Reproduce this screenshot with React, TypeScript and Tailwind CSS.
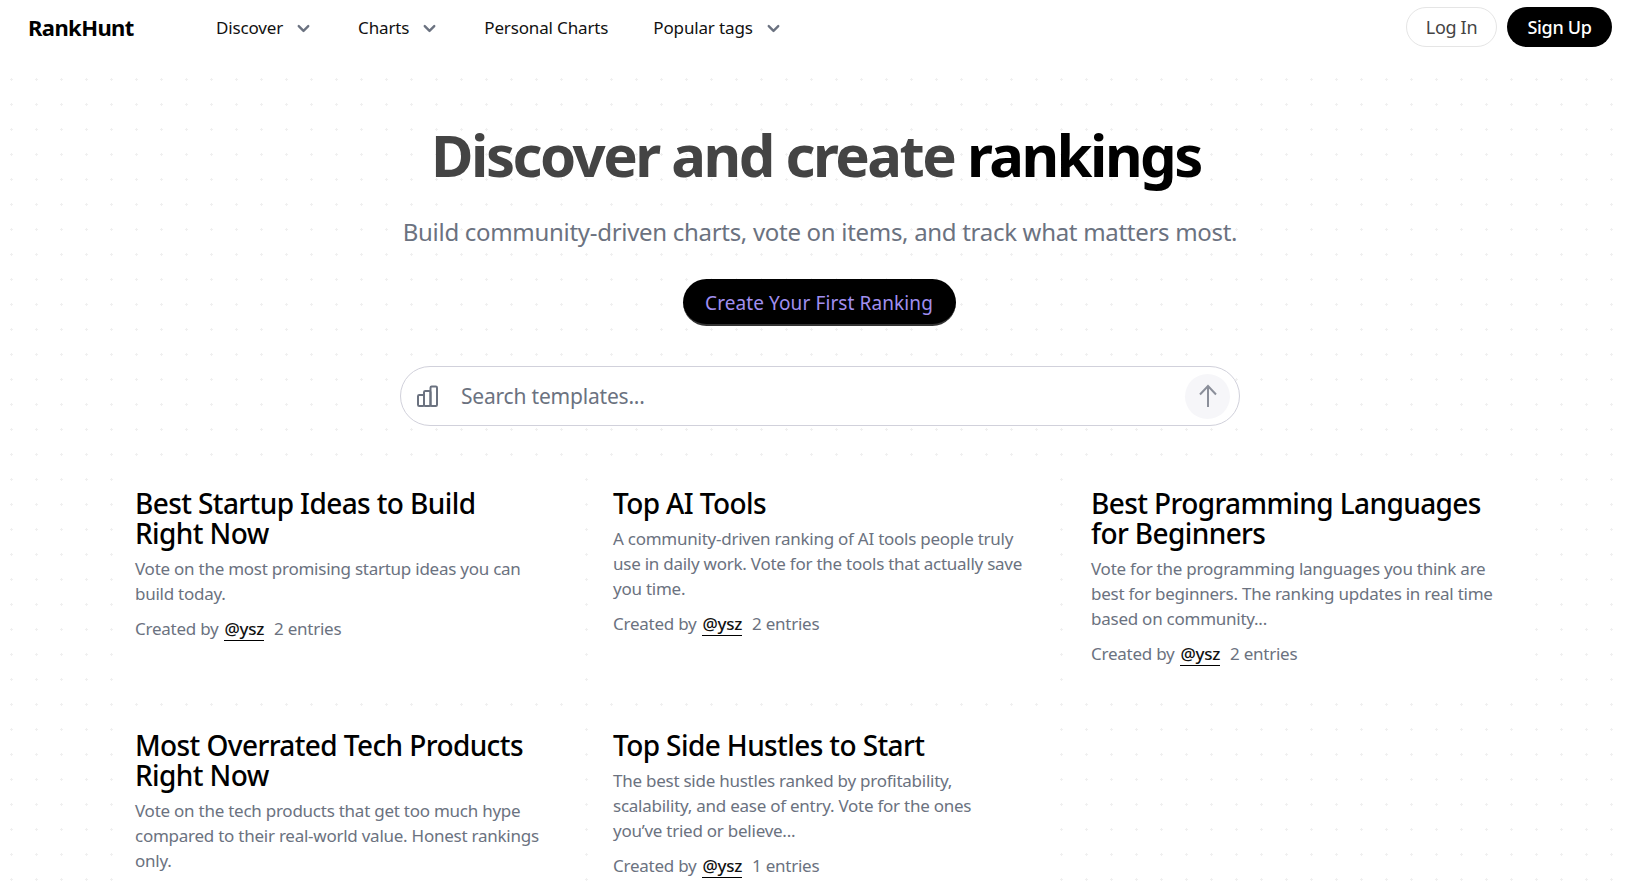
import { ChevronDown } from 'lucide-react'

type Ranking = {
  title: string
  description: string
  entries: number
}

const RANKINGS: Ranking[] = [
  {
    title: 'Best Startup Ideas to Build Right Now',
    description: 'Vote on the most promising startup ideas you can build today.',
    entries: 2,
  },
  {
    title: 'Top AI Tools',
    description:
      'A community-driven ranking of AI tools people truly use in daily work. Vote for the tools that actually save you time.',
    entries: 2,
  },
  {
    title: 'Best Programming Languages for Beginners',
    description:
      'Vote for the programming languages you think are best for beginners. The ranking updates in real time based on community...',
    entries: 2,
  },
  {
    title: 'Most Overrated Tech Products Right Now',
    description:
      'Vote on the tech products that get too much hype compared to their real-world value. Honest rankings only.',
    entries: 2,
  },
  {
    title: 'Top Side Hustles to Start',
    description:
      'The best side hustles ranked by profitability, scalability, and ease of entry. Vote for the ones you’ve tried or believe...',
    entries: 1,
  },
]

function NavItem({ label, menu = false }: { label: string; menu?: boolean }) {
  return (
    <a className="flex items-center gap-[11px] text-[17px] tracking-[-0.15px] text-[#111]">
      {label}
      {menu && <ChevronDown className="h-[19px] w-[19px] text-[#6b7280]" strokeWidth={3} />}
    </a>
  )
}

function RankingCard({ ranking }: { ranking: Ranking }) {
  return (
    <article className="bg-white pb-[24px] pl-[20px] pr-[27px] pt-[20px]">
      <h3 className="text-[28px] font-medium leading-[30px] tracking-[-0.6px] text-black">{ranking.title}</h3>
      <p className="mt-[8px] text-[17px] leading-[25px] tracking-[-0.25px] text-[#6b7280]">{ranking.description}</p>
      <div className="mt-[10px] flex items-baseline text-[17px] leading-[25px] tracking-[-0.25px] text-[#6b7280]">
        Created by
        <span className="ml-[6px] border-b border-black font-medium leading-[23px] text-[#111]">@ysz</span>
        <span className="ml-[10px]">{ranking.entries} entries</span>
      </div>
    </article>
  )
}

export default function App() {
  return (
    <div className="h-[885px] overflow-hidden bg-white bg-[radial-gradient(circle_at_11.5px_4.5px,#f0f0f0_1.2px,transparent_1.3px)] bg-[length:25px_25px] font-['Noto_Sans',sans-serif]">
      <header className="flex h-[56px] items-center bg-white pl-[28px] pr-[14px]">
        <span className="mb-[2px] w-[188px] text-[22px] font-bold tracking-[-0.6px] text-black">RankHunt</span>
        <nav className="flex items-center gap-[45px]">
          <NavItem label="Discover" menu />
          <NavItem label="Charts" menu />
          <NavItem label="Personal Charts" />
          <NavItem label="Popular tags" menu />
        </nav>
        <div className="mb-[2px] ml-auto flex items-center gap-[10px]">
          <button className="h-[40px] w-[91px] rounded-full border border-[#e5e5e5] bg-white text-[18px] tracking-[-0.3px] text-[#444]">Log In</button>
          <button className="h-[40px] w-[105px] rounded-full bg-black text-[18px] font-medium tracking-[-0.3px] text-white">Sign Up</button>
        </div>
      </header>

      <main className="flex flex-col items-center">
        <div className="flex flex-col items-center pl-[14px]">
          <h1 className="mr-[8px] mt-[59px] text-[58px] font-bold leading-[80px] tracking-[-2.5px] text-[#444]">
            Discover and create <span className="text-black">rankings</span>
          </h1>
          <p className="mt-[21px] text-[24px] leading-[32px] tracking-[-0.3px] text-[#6b7280]">
            Build community-driven charts, vote on items, and track what matters most.
          </p>
          <button className="mr-[2px] mt-[31px] h-[47px] w-[273px] rounded-full border-b-2 border-[#333] bg-black pt-[4px] text-[19px] tracking-[0.1px] text-[#a08ff0]">
            Create Your First Ranking
          </button>

          <div className="mt-[40px] flex h-[60px] w-[840px] items-center rounded-full border border-[#d1d1db] bg-white pl-[15px] pr-[9px]">
            <svg viewBox="0 0 24 24" className="h-[24px] w-[24px] text-[#6b7280]" fill="none" stroke="currentColor" strokeWidth="2">
              <rect x="2" y="11" width="6" height="11" rx="1.2" />
              <rect x="8" y="7" width="6.5" height="15" rx="1.2" />
              <rect x="14.5" y="2.5" width="6.5" height="19.5" rx="1.2" />
            </svg>
            <span className="ml-[21px] pt-[2px] text-[21px] tracking-[-0.2px] text-[#6b7280]">Search templates...</span>
            <span className="ml-auto flex h-[45px] w-[45px] items-center justify-center rounded-full bg-[#f6f6f9]">
              <svg viewBox="0 0 24 24" className="h-[24px] w-[24px] text-[#8b8f9a]" fill="none" stroke="currentColor" strokeWidth="2">
                <path d="M12 2v21M4 10.5l8-8.5 8 8.5" />
              </svg>
            </span>
          </div>
        </div>

        <section className="ml-[115px] mt-[42px] grid grid-cols-[458px_458px_458px] gap-[20px] self-start">
          {RANKINGS.map((ranking) => (
            <RankingCard key={ranking.title} ranking={ranking} />
          ))}
        </section>
      </main>
    </div>
  )
}
